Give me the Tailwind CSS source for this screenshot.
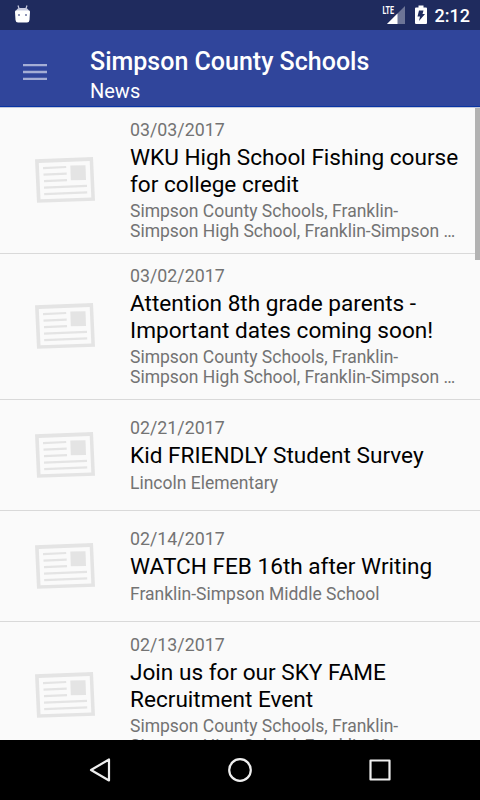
<!DOCTYPE html>
<html lang="en">
<head>
    <meta charset="UTF-8">
    <title>Simpson County Schools - News</title>
    <script src="https://cdn.jsdelivr.net/npm/@tailwindcss/browser@4"></script>
</head>
<body class="bg-[#fafafa] font-[Roboto,sans-serif] w-[480px] h-[800px] overflow-hidden flex flex-col">
    <!-- shared newspaper placeholder -->
    <svg class="hidden">
        <symbol id="paper" viewBox="0 0 60 46">
            <path fill="#e4e4e4" fill-rule="evenodd" d="M0 2.3 58 0 60 43.7 2 45.7ZM3.8 6 54.7 4 56.3 40.5 5.5 42.2Z"/>
            <path fill="#e4e4e4" d="M35.3 8.6 50.5 8.2 51 23 35.8 23.3Z"/>
            <path stroke="#e4e4e4" stroke-width="2.2" d="M8 11.2 31.2 10M8.5 17.6 31.7 16.6M9 24.2 32 23.2M9 30.7 52 28.8M9.2 37.2 52.2 35.3"/>
        </symbol>
    </svg>

    <!-- status bar -->
    <div class="h-[30px] shrink-0 bg-[#1f2b5e] flex items-center">
        <svg class="ml-[15px] -mt-[3px]" width="15" height="18" viewBox="0 0 15 18">
            <path stroke="#c9cce0" stroke-width="1.2" d="M3 0.5 4.2 4M12 0.5 10.8 4"/>
            <path fill="#c9cce0" d="M1 6Q2 3 5 3H10Q13 3 14 6Z"/>
            <path fill="#fff" d="M0 6.5Q0 5.5 1 5.5H14Q15 5.5 15 6.5L14.5 15Q14.3 17.5 12 17.5H3Q0.7 17.5 0.5 15Z"/>
            <path fill="#9197b8" d="M3 9h2v2H3zM10 9h2v2h-2z"/>
        </svg>
        <div class="ml-auto flex items-center">
            <svg width="24" height="20" viewBox="0 0 24 20">
                <path fill="#fff" fill-opacity=".35" d="M23 1V19H5Z"/>
                <path fill="#fff" d="M15.5 8.5V19H5Z"/>
                <text x="0.5" y="9.3" fill="#fff" font-size="11" font-weight="700" textLength="11.5" lengthAdjust="spacingAndGlyphs">LTE</text>
            </svg>
            <svg class="ml-[9px]" width="12" height="20" viewBox="0 0 12 20">
                <path fill="#fff" d="M3.5 0.5h5v2H11Q12 2.5 12 3.5V18Q12 19 11 19H1Q0 19 0 18V3.5Q0 2.5 1 2.5H3.5Z"/>
                <path fill="#1f2b5e" d="M4 5.5H8.5L7.5 9H10L4 16 5 11.5H2.5Z"/>
            </svg>
            <span class="ml-[8px] mr-[10px] pt-[2px] text-[18px] leading-[28px] font-medium text-white">2:12</span>
        </div>
    </div>

    <!-- app bar -->
    <header class="relative z-10 h-[77px] shrink-0 bg-[#30459b] border-b border-[#0834a4] shadow-[0_1px_0_#c3c8dc] flex text-white">
        <svg class="ml-[23px] mt-[33px]" width="24" height="18" viewBox="0 0 24 18">
            <path stroke="#a5aed5" stroke-width="2.3" d="M0 2.2H24M0 9H24M0 15.8H24"/>
        </svg>
        <div class="ml-[43px] pt-4">
            <h1 class="text-[25px] leading-[31px] font-medium">Simpson County Schools</h1>
            <p class="text-[20px] leading-[28px]">News</p>
        </div>
    </header>

    <main class="relative flex-1 min-h-0 overflow-hidden text-[#737373]">
        <article class="h-[147px] border-b border-[#d9d9d9] flex items-center">
            <svg class="ml-[35px] w-[60px] h-[46px] shrink-0"><use href="#paper"/></svg>
            <div class="ml-[35px] whitespace-nowrap">
                <p class="text-[17.8px] leading-[21px]">03/03/2017</p>
                <h2 class="mt-[5px] mb-[3px] text-[22.6px] leading-[26.5px] text-black">WKU High School Fishing course<br>for college credit</h2>
                <p class="text-[17.5px] leading-[20px]">Simpson County Schools, Franklin-<br>Simpson High School, Franklin-Simpson …</p>
            </div>
        </article>
        <article class="h-[146px] pb-px border-b border-[#d9d9d9] flex items-center">
            <svg class="ml-[35px] w-[60px] h-[46px] shrink-0"><use href="#paper"/></svg>
            <div class="ml-[35px] whitespace-nowrap">
                <p class="text-[17.8px] leading-[21px]">03/02/2017</p>
                <h2 class="mt-[5px] mb-[3px] text-[22.6px] leading-[26.5px] text-black">Attention 8th grade parents -<br>Important dates coming soon!</h2>
                <p class="text-[17.5px] leading-[20px]">Simpson County Schools, Franklin-<br>Simpson High School, Franklin-Simpson …</p>
            </div>
        </article>
        <article class="h-[111px] border-b border-[#d9d9d9] flex items-center">
            <svg class="ml-[35px] w-[60px] h-[46px] shrink-0"><use href="#paper"/></svg>
            <div class="ml-[35px] whitespace-nowrap">
                <p class="text-[17.8px] leading-[21px]">02/21/2017</p>
                <h2 class="mt-[5px] mb-[3px] text-[22.6px] leading-[26.5px] text-black">Kid FRIENDLY Student Survey</h2>
                <p class="text-[17.5px] leading-[20px]">Lincoln Elementary</p>
            </div>
        </article>
        <article class="h-[111px] border-b border-[#d9d9d9] flex items-center">
            <svg class="ml-[35px] w-[60px] h-[46px] shrink-0"><use href="#paper"/></svg>
            <div class="ml-[35px] whitespace-nowrap">
                <p class="text-[17.8px] leading-[21px]">02/14/2017</p>
                <h2 class="mt-[5px] mb-[3px] text-[22.6px] leading-[26.5px] text-black">WATCH FEB 16th after Writing</h2>
                <p class="text-[17.5px] leading-[20px]">Franklin-Simpson Middle School</p>
            </div>
        </article>
        <article class="h-[146px] flex items-center">
            <svg class="ml-[35px] w-[60px] h-[46px] shrink-0"><use href="#paper"/></svg>
            <div class="ml-[35px] whitespace-nowrap">
                <p class="text-[17.8px] leading-[21px]">02/13/2017</p>
                <h2 class="mt-[5px] mb-[3px] text-[22.6px] leading-[26.5px] text-black">Join us for our SKY FAME<br>Recruitment Event</h2>
                <p class="text-[17.5px] leading-[20px]">Simpson County Schools, Franklin-<br>Simpson High School, Franklin-Simpson …</p>
            </div>
        </article>
        <div class="absolute top-0 right-0 w-[5px] h-[153px] bg-[#b2b2b2]"></div>
    </main>

    <!-- navigation bar -->
    <nav class="h-[60px] shrink-0 bg-black flex items-center justify-center gap-[116px]">
        <svg width="24" height="24" viewBox="0 0 24 24" fill="none" stroke="#eee" stroke-width="2.2" stroke-linejoin="round">
            <path d="M21 1.5V22.5L3 12Z"/>
        </svg>
        <svg width="24" height="24" viewBox="0 0 24 24" fill="none" stroke="#eee" stroke-width="2.2">
            <circle cx="12" cy="12" r="10.8"/>
        </svg>
        <svg width="24" height="24" viewBox="0 0 24 24" fill="none" stroke="#eee" stroke-width="2.2" stroke-linejoin="round">
            <path d="M2.5 2.5H21.5V21.5H2.5Z"/>
        </svg>
    </nav>
</body>
</html>
